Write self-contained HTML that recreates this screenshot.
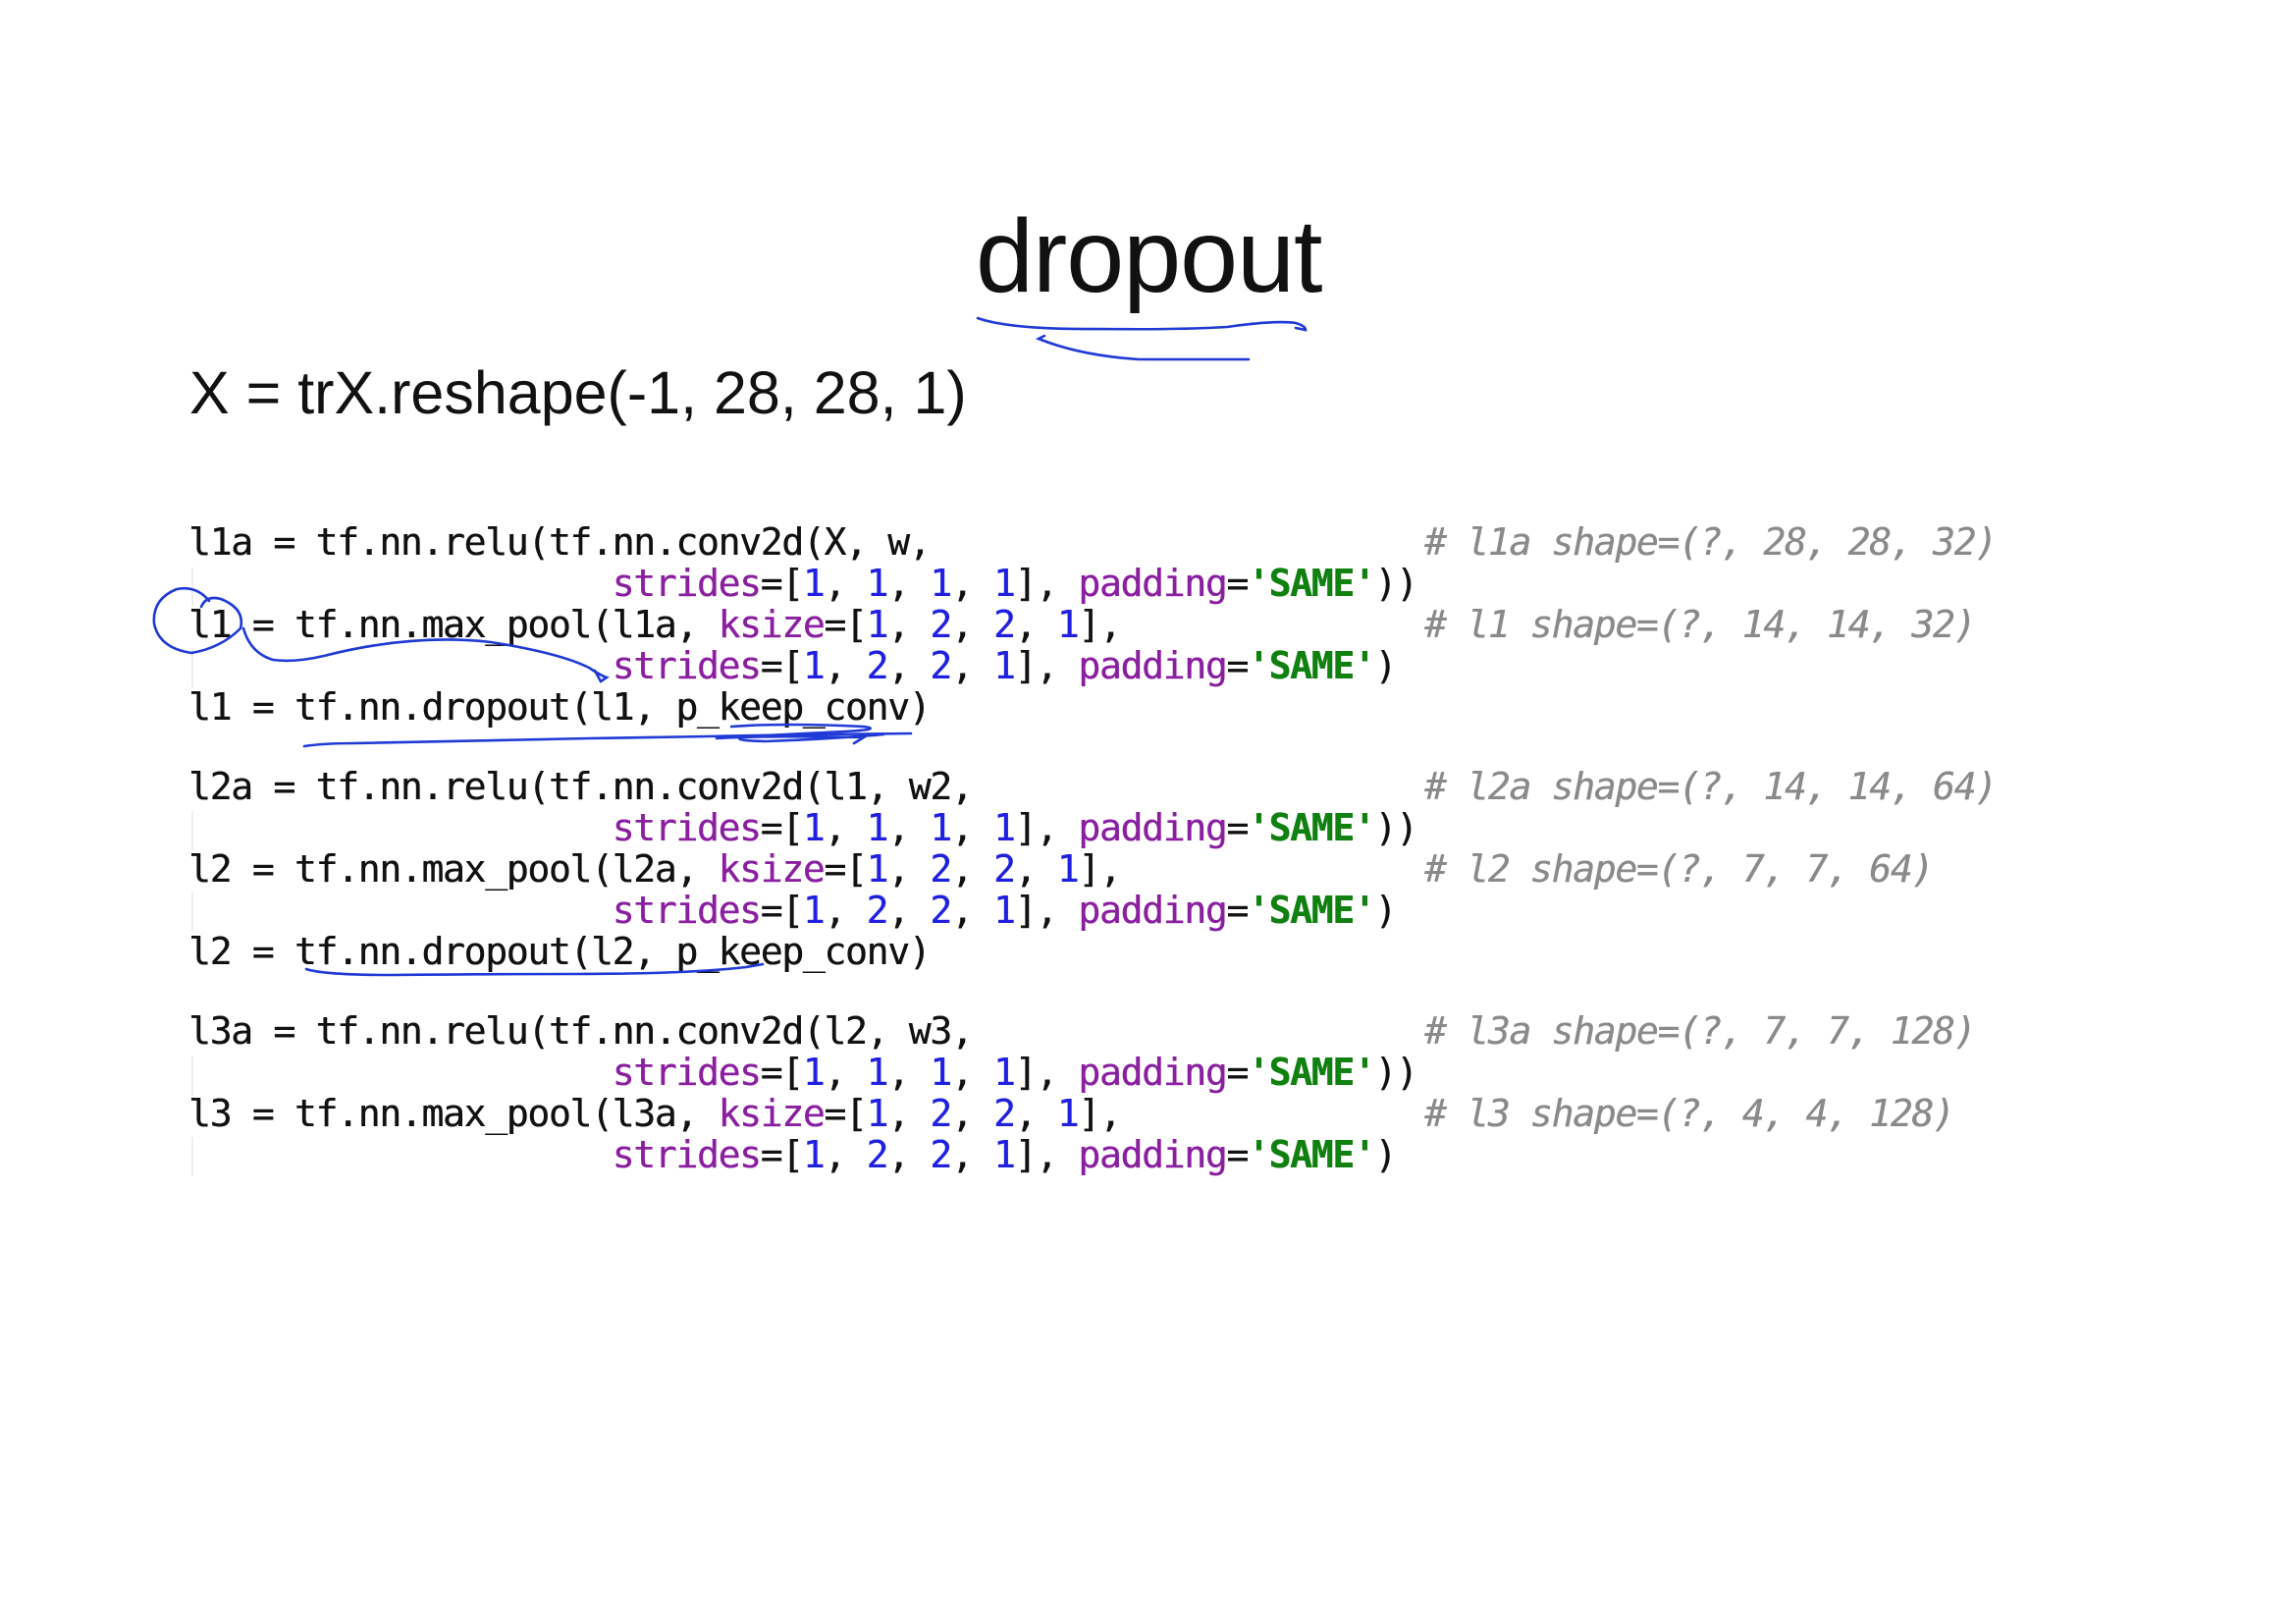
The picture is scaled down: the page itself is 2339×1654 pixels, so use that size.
<!DOCTYPE html>
<html><head><meta charset="utf-8"><style>
html,body{margin:0;padding:0;background:#fff;}
body{width:2339px;height:1654px;position:relative;overflow:hidden;}
.title{position:absolute;left:994px;top:196px;font-family:"Liberation Sans",sans-serif;font-size:106px;line-height:130px;color:#111;letter-spacing:-1px;}
.x{position:absolute;left:193px;top:360px;font-family:"Liberation Sans",sans-serif;font-size:61px;line-height:80px;color:#111;}
.code{position:absolute;left:192px;font-family:"DejaVu Sans Mono",monospace;font-size:38px;letter-spacing:-1.3px;line-height:42px;color:#111;white-space:pre;text-shadow:0.4px 0 0 currentColor;}
.k{color:#8a1fa0}.n{color:#2020e0}.s{color:#108010;font-weight:bold}
.c{position:absolute;left:1451px;color:#8a8a8a;font-style:italic;white-space:pre;}
.vl{position:absolute;left:195px;width:2px;background:#eee;}
</style></head><body>
<div class="title">dropout</div>
<div class="x">X = trX.reshape(-1, 28, 28, 1)</div>

<div class="vl" style="top:578px;height:40px"></div>
<div class="vl" style="top:660px;height:40px"></div>
<div class="vl" style="top:826px;height:40px"></div>
<div class="vl" style="top:908px;height:40px"></div>
<div class="vl" style="top:1076px;height:40px"></div>
<div class="vl" style="top:1158px;height:40px"></div>

<div class="code" style="top:531px">l1a = tf.nn.relu(tf.nn.conv2d(X, w,</div>
<div class="code" style="top:531px;left:0"><span class="c"># l1a shape=(?, 28, 28, 32)</span></div>
<div class="code" style="top:573px">                    <span class="k">strides</span>=[<span class="n">1</span>, <span class="n">1</span>, <span class="n">1</span>, <span class="n">1</span>], <span class="k">padding</span>=<span class="s">'SAME'</span>))</div>
<div class="code" style="top:615px">l1 = tf.nn.max_pool(l1a, <span class="k">ksize</span>=[<span class="n">1</span>, <span class="n">2</span>, <span class="n">2</span>, <span class="n">1</span>],</div>
<div class="code" style="top:615px;left:0"><span class="c"># l1 shape=(?, 14, 14, 32)</span></div>
<div class="code" style="top:657px">                    <span class="k">strides</span>=[<span class="n">1</span>, <span class="n">2</span>, <span class="n">2</span>, <span class="n">1</span>], <span class="k">padding</span>=<span class="s">'SAME'</span>)</div>
<div class="code" style="top:699px">l1 = tf.nn.dropout(l1, p_keep_conv)</div>

<div class="code" style="top:780px">l2a = tf.nn.relu(tf.nn.conv2d(l1, w2,</div>
<div class="code" style="top:780px;left:0"><span class="c"># l2a shape=(?, 14, 14, 64)</span></div>
<div class="code" style="top:822px">                    <span class="k">strides</span>=[<span class="n">1</span>, <span class="n">1</span>, <span class="n">1</span>, <span class="n">1</span>], <span class="k">padding</span>=<span class="s">'SAME'</span>))</div>
<div class="code" style="top:864px">l2 = tf.nn.max_pool(l2a, <span class="k">ksize</span>=[<span class="n">1</span>, <span class="n">2</span>, <span class="n">2</span>, <span class="n">1</span>],</div>
<div class="code" style="top:864px;left:0"><span class="c"># l2 shape=(?, 7, 7, 64)</span></div>
<div class="code" style="top:906px">                    <span class="k">strides</span>=[<span class="n">1</span>, <span class="n">2</span>, <span class="n">2</span>, <span class="n">1</span>], <span class="k">padding</span>=<span class="s">'SAME'</span>)</div>
<div class="code" style="top:948px">l2 = tf.nn.dropout(l2, p_keep_conv)</div>

<div class="code" style="top:1029px">l3a = tf.nn.relu(tf.nn.conv2d(l2, w3,</div>
<div class="code" style="top:1029px;left:0"><span class="c"># l3a shape=(?, 7, 7, 128)</span></div>
<div class="code" style="top:1071px">                    <span class="k">strides</span>=[<span class="n">1</span>, <span class="n">1</span>, <span class="n">1</span>, <span class="n">1</span>], <span class="k">padding</span>=<span class="s">'SAME'</span>))</div>
<div class="code" style="top:1113px">l3 = tf.nn.max_pool(l3a, <span class="k">ksize</span>=[<span class="n">1</span>, <span class="n">2</span>, <span class="n">2</span>, <span class="n">1</span>],</div>
<div class="code" style="top:1113px;left:0"><span class="c"># l3 shape=(?, 4, 4, 128)</span></div>
<div class="code" style="top:1155px">                    <span class="k">strides</span>=[<span class="n">1</span>, <span class="n">2</span>, <span class="n">2</span>, <span class="n">1</span>], <span class="k">padding</span>=<span class="s">'SAME'</span>)</div>

<svg width="2339" height="1654" style="position:absolute;left:0;top:0" fill="none" stroke="#1f3ad6" stroke-width="2.6" stroke-linecap="round">
<path d="M996,324 Q1030,336 1120,335 Q1200,336 1250,333 Q1300,326 1320,329 Q1330,332 1330,336 L1320,334"/>
<path d="M1064,342 L1058,345 Q1100,362 1160,366 L1272,366"/>
<path d="M213,612 Q200,596 180,600 Q155,610 157,635 Q162,660 195,665 Q225,660 245,640 Q250,620 225,610 Q210,606 205,618"/>
<path d="M248,640 Q255,665 278,672 Q300,675 330,668 Q420,645 500,654 Q570,665 600,680 Q612,688 618,690 L612,694 L606,683"/>
<path d="M310,760 Q330,757 360,757 L600,752 L720,750 Q820,748 928,747"/>
<path d="M745,740 Q800,736 880,740 Q900,743 860,745 Q800,748 760,750 Q740,754 780,755 Q840,753 900,748"/>
<path d="M730,752 Q780,749 880,751 L870,757"/>
<path d="M312,987 Q330,993 400,993 Q500,992 582,992 Q700,992 760,985 L777,982"/>
</svg>
</body></html>
